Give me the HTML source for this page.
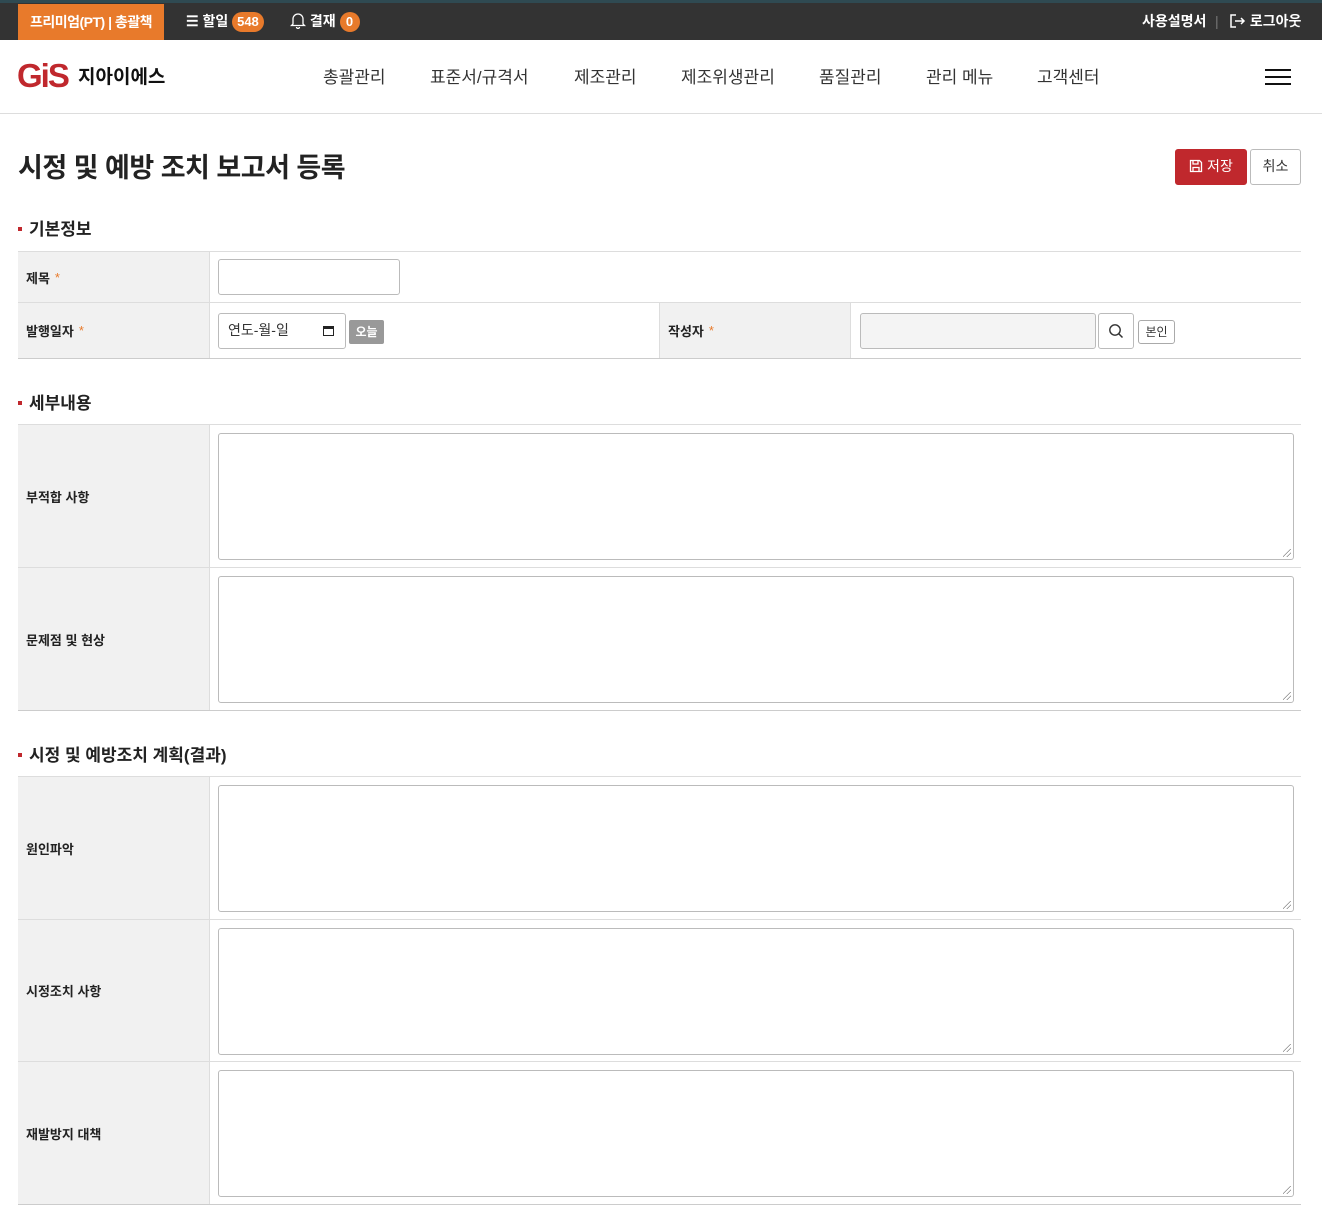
<!DOCTYPE html>
<html><head><meta charset="utf-8"><style>
*{box-sizing:border-box;margin:0;padding:0}
body{width:1322px;height:1217px;background:#fff;font-family:"Liberation Sans","Noto Sans CJK KR",sans-serif;color:#222;position:relative;overflow:hidden}
.top{position:absolute;left:0;top:0;width:1322px;height:40px;background:#333;border-top:3px solid #2f4a52}
.top .pt{position:absolute;left:18px;top:1px;width:146px;height:36px;background:#e87a2b;color:#fff;font-size:14px;font-weight:bold;text-align:center;line-height:36px;letter-spacing:-0.5px}
.ti{position:absolute;top:0px;line-height:36px;color:#fff;font-size:14px;font-weight:bold}
.badge{display:inline-block;background:#e87a2b;border-radius:10px;padding:0 5px;height:20px;line-height:20px;font-size:13px;min-width:20px;text-align:center}
.hdr{position:absolute;top:40px;left:0;width:1322px;height:74px;border-bottom:1px solid #ddd}
.nav{position:absolute;top:23px;font-size:17px;color:#333}
h1{position:absolute;left:18px;top:146px;font-size:27px;font-weight:bold;letter-spacing:-0.5px}
.btn{position:absolute;top:149px;height:36px;border-radius:3px;font-size:14px;line-height:32px;text-align:center}
.sec{position:absolute;left:18px;font-size:17px;font-weight:bold}
.sec:before{content:"";display:inline-block;width:4px;height:4px;background:#c0282d;margin-right:7px;vertical-align:middle;position:relative;top:-2px}
.tbl{position:absolute;left:18px;width:1283px;border-top:1px solid #ddd}
.row{position:relative;border-bottom:1px solid #ccc}
.lab{position:absolute;left:0;top:0;bottom:0;width:192px;background:#f1f1f1;border-right:1px solid #ddd;font-size:13px;font-weight:bold;padding-left:8px;display:flex;align-items:center}
.req{color:#e87a2b;margin-left:5px;font-weight:normal}
.ta{position:absolute;left:200px;top:8px;width:1076px;height:127px;border:1px solid #bbb;border-radius:3px}
.ta:after{content:"";position:absolute;right:2px;bottom:2px;width:8px;height:8px;background:linear-gradient(135deg,transparent 45%,#888 45%,#888 52%,transparent 52%,transparent 70%,#888 70%,#888 77%,transparent 77%)}
</style></head><body>
<div class="top">
<div class="pt">프리미엄(PT) | 총괄책</div>
<div class="ti" style="left:186px">☰ 할일 <span class="badge">548</span></div>
<div class="ti" style="left:290px"><svg width="16" height="17" viewBox="0 0 16 17" style="vertical-align:-3px"><path d="M3 12V7a5 5 0 0 1 10 0v5l1.5 1.5h-13z M6.5 15a1.5 1.5 0 0 0 3 0" fill="none" stroke="#fff" stroke-width="1.3"/></svg> 결재 <span class="badge">0</span></div>
<div class="ti" style="left:1142px">사용설명서</div>
<div class="ti" style="left:1215px;color:#777;font-weight:normal">|</div>
<div class="ti" style="left:1230px"><svg width="16" height="14" viewBox="0 0 16 14" style="vertical-align:-2px"><path d="M6 1H1v12h5M5 7h9M11 4l3 3-3 3" fill="none" stroke="#fff" stroke-width="1.5"/></svg> 로그아웃</div>
</div>
<div class="hdr">
<div style="position:absolute;left:17px;top:17px;font-size:33px;font-weight:900;color:#c0282d;letter-spacing:-2px;font-family:'Liberation Sans',sans-serif">GiS</div>
<div style="position:absolute;left:78px;top:22px;font-size:19px;font-weight:bold;color:#111">지아이에스</div>
<div class="nav" style="left:323px">총괄관리</div>
<div class="nav" style="left:430px">표준서/규격서</div>
<div class="nav" style="left:574px">제조관리</div>
<div class="nav" style="left:681px">제조위생관리</div>
<div class="nav" style="left:819px">품질관리</div>
<div class="nav" style="left:926px">관리 메뉴</div>
<div class="nav" style="left:1037px">고객센터</div>
<div style="position:absolute;left:1265px;top:29px;width:26px;height:16px;border-top:2px solid #111;border-bottom:2px solid #111"><div style="margin-top:5px;height:2px;background:#111"></div></div>
</div>
<h1>시정 및 예방 조치 보고서 등록</h1>
<div class="btn" style="left:1175px;width:72px;background:#c0282d;color:#fff;border:1px solid #c0282d"><svg width="14" height="14" viewBox="0 0 14 14" style="vertical-align:-2px"><path d="M1.5 1.5h9l2 2v9h-11z M4 1.5v3.5h5V1.5 M4 12.5V8.5h6v4" fill="none" stroke="#fff" stroke-width="1.3"/></svg> 저장</div>
<div class="btn" style="left:1250px;width:51px;background:#fff;border:1px solid #bbb;color:#333">취소</div>

<div class="sec" style="top:215px">기본정보</div>
<div class="tbl" style="top:251px">
<div class="row" style="height:51px;border-bottom-color:#ddd"><div class="lab">제목<span class="req">*</span></div>
<div style="position:absolute;left:200px;top:7px;width:182px;height:36px;border:1px solid #bbb;border-radius:3px"></div></div>
<div class="row" style="height:56px"><div class="lab">발행일자<span class="req">*</span></div>
<div style="position:absolute;left:200px;top:10px;width:128px;height:36px;border:1px solid #bbb;border-radius:3px;font-size:14px;line-height:32px;padding-left:9px;color:#333">연도-월-일<span style="position:absolute;right:11px;top:12px;width:11px;height:10px;border:1.5px solid #222;border-top-width:3px"></span></div>
<div style="position:absolute;left:331px;top:17px;width:35px;height:24px;background:#999;border-radius:2px;color:#fff;font-size:12px;font-weight:bold;text-align:center;line-height:24px">오늘</div>
<div class="lab" style="left:641px;border-left:1px solid #ddd">작성자<span class="req">*</span></div>
<div style="position:absolute;left:842px;top:10px;width:236px;height:36px;border:1px solid #bbb;border-radius:3px;background:#f4f4f4"></div>
<div style="position:absolute;left:1080px;top:10px;width:36px;height:36px;border:1px solid #bbb;border-radius:3px"><svg width="16" height="16" viewBox="0 0 16 16" style="position:absolute;left:9px;top:9px"><circle cx="7" cy="7" r="5.2" fill="none" stroke="#333" stroke-width="1.4"/><path d="M11 11l3.5 3.5" stroke="#333" stroke-width="1.5"/></svg></div>
<div style="position:absolute;left:1120px;top:17px;width:37px;height:24px;border:1px solid #aaa;border-radius:3px;font-size:12px;text-align:center;line-height:22px;color:#333">본인</div>
</div></div>

<div class="sec" style="top:389px">세부내용</div>
<div class="tbl" style="top:424px">
<div class="row" style="height:143px;border-bottom-color:#ddd"><div class="lab">부적합 사항</div><div class="ta"></div></div>
<div class="row" style="height:143px"><div class="lab">문제점 및 현상</div><div class="ta"></div></div>
</div>

<div class="sec" style="top:741px">시정 및 예방조치 계획(결과)</div>
<div class="tbl" style="top:776px">
<div class="row" style="height:143px;border-bottom-color:#ddd"><div class="lab">원인파악</div><div class="ta"></div></div>
<div class="row" style="height:142px;border-bottom-color:#ddd"><div class="lab">시정조치 사항</div><div class="ta"></div></div>
<div class="row" style="height:143px"><div class="lab">재발방지 대책</div><div class="ta"></div></div>
</div>
</body></html>
